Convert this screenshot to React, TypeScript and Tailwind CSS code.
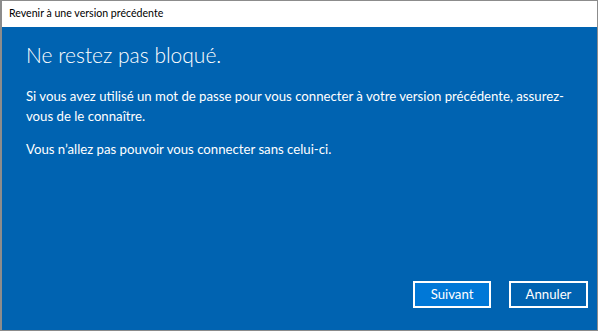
export default function App() {
  const font = { fontFamily: 'Lato, "Open Sans", "Noto Sans", sans-serif' };

  return (
    <div className="w-[600px] h-[331px] bg-white overflow-hidden" style={font}>
      <div className="w-[598px] h-[331px] flex flex-col border-l-2 border-t border-r border-b border-[#8c8c8c]">
        {/* title bar */}
        <div className="h-[26px] shrink-0 flex items-center pl-[7px] text-[10.6px] text-black bg-white">
          Revenir à une version précédente
        </div>

        {/* content */}
        <div className="flex-1 bg-[#0063b1] text-white flex flex-col px-[24px]">
          <h1 className="mt-[13px] text-[21px] font-light leading-[30px]">Ne restez pas bloqué.</h1>

          <p className="mt-[16px] text-[13.2px] leading-[20px] whitespace-nowrap">
            Si vous avez utilisé un mot de passe pour vous connecter à votre version précédente, assurez-
            <br />
            vous de le connaître.
          </p>
          <p className="mt-[13px] text-[13.2px] leading-[20px]">
            Vous n’allez pas pouvoir vous connecter sans celui-ci.
          </p>

          <div className="mt-auto mb-[22px] mr-[-15px] flex justify-end gap-[18px]">
            <button className="w-[78px] h-[27px] bg-[#0078d7] border-2 border-white text-[13.2px] text-white">
              Suivant
            </button>
            <button className="w-[79px] h-[27px] bg-[#0063b1] border-2 border-white text-[13.2px] text-white">
              Annuler
            </button>
          </div>
        </div>
      </div>
    </div>
  );
}
